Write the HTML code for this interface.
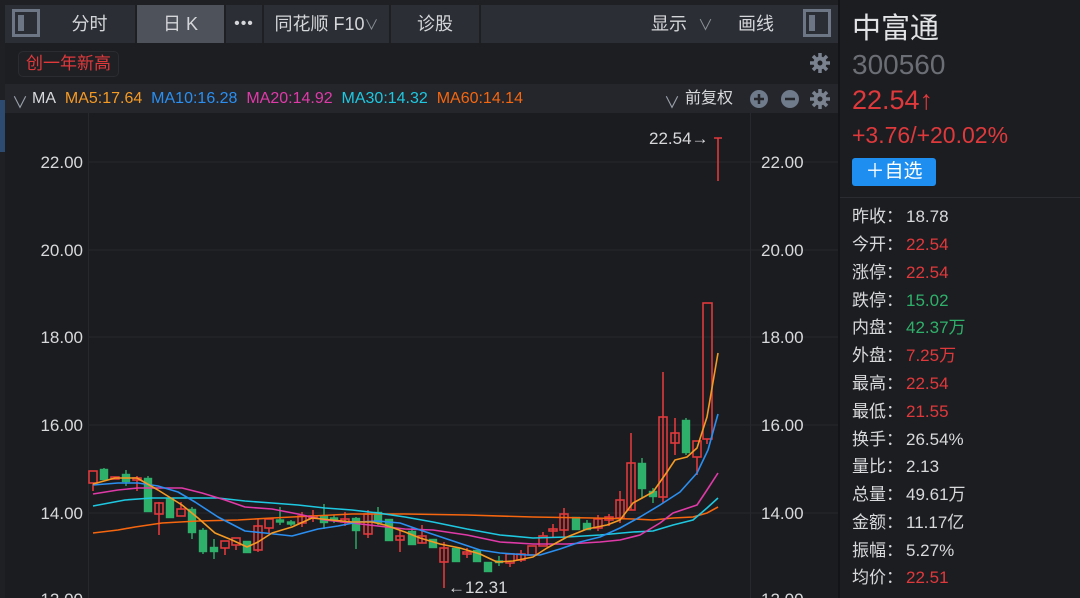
<!DOCTYPE html>
<html><head><meta charset="utf-8"><style>
*{margin:0;padding:0;box-sizing:border-box}
body{width:1080px;height:598px;overflow:hidden;background:#1b1c20;font-family:"Liberation Sans","Noto Sans CJK SC",sans-serif;position:relative;color:#d8d9db}
.a{position:absolute}
.top{left:5px;top:0;width:835px;height:5px;background:#1e2024}
.bar{left:5px;top:5px;width:835px;height:38px;background:#2b2e35}
.cell{top:5px;height:38px;line-height:38px;text-align:center;font-size:18px;color:#d4d6d9;border-right:2px solid #1d1f23;white-space:nowrap}
.ico{width:28px;height:28px;border:3px solid #6c7685;}
.ico i{position:absolute;left:3px;top:3px;width:6px;height:16px;background:#6c7685}
.st{left:852px;font-size:17px;color:#d8d9db;height:22px;line-height:22px;white-space:nowrap;width:220px}
.st span{position:absolute;left:54px;top:0;line-height:22px}
.r{color:#e0393c}.g{color:#2fb06a}
</style></head><body>
<div class="a" style="left:0;top:0;width:5px;height:598px;background:#1e2024"></div>
<div class="a" style="left:0;top:100px;width:5px;height:52px;background:#2d4b70"></div>
<div class="a top"></div>
<div class="a bar"></div>
<div class="a ico" style="left:12px;top:9px"><i></i></div>
<div class="a cell" style="left:44px;width:93px">分时</div>
<div class="a cell" style="left:137px;width:89px;background:#4e535b">日 K</div>
<div class="a cell" style="left:226px;width:38px;font-size:16px;letter-spacing:1px">•••</div>
<div class="a cell" style="left:264px;width:127px">同花顺 F10<span style="color:#8a8f96;font-size:14px">∨</span></div>
<div class="a cell" style="left:391px;width:90px">诊股</div>
<div class="a" style="left:651px;top:12px;font-size:18px;line-height:24px;color:#d4d6d9;white-space:nowrap">显示 <span style="color:#8a8f96;font-size:15px;margin-left:6px">∨</span></div>
<div class="a" style="left:738px;top:12px;font-size:18px;line-height:24px;color:#d4d6d9">画线</div>
<div class="a ico" style="left:803px;top:9px"><i></i></div>
<div class="a" style="left:5px;top:43px;width:835px;height:41px;background:#1d1e22"></div>
<div class="a" style="left:18px;top:51px;width:101px;height:26px;border:1px solid #2a2c31;border-radius:5px;background:#1f2024;color:#e0393c;font-size:17px;line-height:24px;text-align:center">创一年新高</div>
<div class="a" style="left:5px;top:84px;width:835px;height:29px;background:#24262c"></div>
<div class="a" style="left:12px;top:89px;font-size:16px;color:#9aa0a8">∨</div>
<div class="a" style="left:32px;top:88px;font-size:16px;line-height:22px;white-space:nowrap"><span style="color:#d8d9db">MA</span>&nbsp;&nbsp;<span style="color:#f59a23">MA5:17.64</span>&nbsp;&nbsp;<span style="color:#2a8ff0">MA10:16.28</span>&nbsp;&nbsp;<span style="color:#e03aa8">MA20:14.92</span>&nbsp;&nbsp;<span style="color:#1ec8e0">MA30:14.32</span>&nbsp;&nbsp;<span style="color:#f5660f">MA60:14.14</span></div>
<div class="a" style="left:664px;top:89px;font-size:16px;color:#9aa0a8">∨</div>
<div class="a" style="left:685px;top:88px;font-size:16px;line-height:22px;color:#d8d9db">前复权</div>
<svg class="a" style="left:0;top:0" width="840" height="598">
<g fill="#6f7a8a">
<circle cx="759" cy="99" r="9"/><circle cx="790" cy="99" r="9"/>
</g>
<path d="M754 99h10M759 94v10M785 99h10" stroke="#24262c" stroke-width="2.5"/>
<g fill="#7a8290"><circle cx="820" cy="99" r="6.5"/><g stroke="#7a8290" stroke-width="3.5"><path d="M820 89v20M810 99h20M813 92l14 14M827 92l-14 14"/></g><circle cx="820" cy="99" r="2.5" fill="#24262c"/></g>
<g fill="#7a8290"><circle cx="820" cy="63" r="6.5"/><g stroke="#7a8290" stroke-width="3.5"><path d="M820 53v20M810 63h20M813 56l14 14M827 56l-14 14"/></g><circle cx="820" cy="63" r="2.5" fill="#1d1e22"/></g>
<g stroke="#26282d" stroke-width="1"><path d="M88 162H840M88 250H840M88 337H840M88 425H840M88 513H840M88.5 113V598M750.5 113V598"/></g>
<g font-size="17" fill="#d8d9db" text-anchor="end"><text x="83" y="168">22.00</text><text x="83" y="256">20.00</text><text x="83" y="343">18.00</text><text x="83" y="431">16.00</text><text x="83" y="519">14.00</text><text x="83" y="605">12.00</text></g>
<g font-size="17" fill="#d8d9db"><text x="761" y="168">22.00</text><text x="761" y="256">20.00</text><text x="761" y="343">18.00</text><text x="761" y="431">16.00</text><text x="761" y="519">14.00</text><text x="761" y="605">12.00</text><text x="649" y="144">22.54→</text><text x="448" y="593">←12.31</text></g>
<g stroke="#e0393c" stroke-width="1.6" fill="none">
<path d="M718 138v43M714 138h8"/>
<path d="M93 483v8M137 476v15M159 502v33M181 502v7M225 548v7M236 545v5M258 519v33M269 528v6M302 512v15M313 510v12M345 512v14M368 510v28M400 530v22M422 525v18M444 542v46M467 548v10M510 563v4M521 550v12M543 532v4M553 524v14M564 508v30M598 515v16M609 514v12M620 491v32M631 433v77M663 372v131M675 418v37M697 457v18M707 439v5"/>
<rect x="89" y="471" width="8" height="12"/><rect x="111" y="477" width="8" height="2"/><rect x="133" y="478" width="8" height="2"/><rect x="155" y="503" width="8" height="11"/><rect x="177" y="509" width="8" height="7"/><rect x="221" y="541" width="8" height="7"/><rect x="232" y="538" width="8" height="7"/><rect x="254" y="526" width="8" height="24"/><rect x="265" y="519" width="8" height="9"/><rect x="298" y="516" width="8" height="7"/><rect x="309" y="516" width="8" height="2"/><rect x="341" y="519" width="8" height="3"/><rect x="364" y="514" width="8" height="20"/><rect x="396" y="536" width="8" height="4"/><rect x="418" y="536" width="8" height="7"/><rect x="440" y="548" width="8" height="14"/><rect x="463" y="552" width="8" height="2"/><rect x="506" y="554" width="8" height="9"/><rect x="517" y="554" width="8" height="6"/><rect x="528" y="546" width="8" height="9"/><rect x="539" y="536" width="8" height="10"/><rect x="549" y="529" width="8" height="2"/><rect x="560" y="514" width="8" height="16"/><rect x="594" y="519" width="8" height="9"/><rect x="605" y="517" width="8" height="3"/><rect x="616" y="500" width="8" height="18"/><rect x="627" y="463" width="8" height="47"/><rect x="659" y="417" width="8" height="80"/><rect x="671" y="433" width="8" height="10"/><rect x="693" y="441" width="8" height="16"/><rect x="703" y="303" width="9" height="136"/>
</g>
<g fill="#2fb06a" stroke="#2fb06a" stroke-width="1.4">
<path d="M104 468v12M126 470v16M148 476v36M170 498v20M192 507v32M203 528v26M214 539v20M247 541v12M280 507v18M291 520v6M324 504v25M334 515v8M356 517v32M378 507v18M389 519v22M412 528v17M433 539v9M456 548v14M477 550v12M488 562v10M499 556v10M576 517v13M587 520v10M642 458v40M653 488v15M686 418v37"/>
<rect x="100.5" y="469.5" width="7" height="10"/><rect x="122.5" y="474.5" width="7" height="7"/><rect x="144.5" y="478.5" width="7" height="33"/><rect x="166.5" y="498.5" width="7" height="19"/><rect x="188.5" y="509.5" width="7" height="23"/><rect x="199.5" y="530.5" width="7" height="21"/><rect x="210.5" y="547.5" width="7" height="4"/><rect x="243.5" y="541.5" width="7" height="11"/><rect x="276.5" y="520" width="7" height="2"/><rect x="287.5" y="522" width="7" height="2"/><rect x="320.5" y="516.5" width="7" height="6"/><rect x="330.5" y="518" width="7" height="2"/><rect x="352.5" y="518.5" width="7" height="12"/><rect x="374.5" y="512.5" width="7" height="10"/><rect x="385.5" y="519.5" width="7" height="21"/><rect x="408.5" y="531.5" width="7" height="13"/><rect x="429.5" y="539.5" width="7" height="8"/><rect x="452.5" y="548.5" width="7" height="13"/><rect x="473.5" y="550.5" width="7" height="11"/><rect x="484.5" y="562.5" width="7" height="9"/><rect x="495.5" y="561" width="7" height="1.5"/><rect x="572.5" y="517.5" width="7" height="12"/><rect x="583.5" y="523.5" width="7" height="6"/><rect x="638.5" y="463.5" width="7" height="25"/><rect x="649.5" y="491.5" width="7" height="5"/><rect x="682.5" y="420.5" width="7" height="32"/>
</g>
<g fill="none" stroke-width="1.6" stroke-linejoin="round">
<polyline stroke="#f5660f" points="93,533 118,530 135,527 162,523 198,521 238,520 272,518 312,516 352,514 405,514 467,515 533,517 593,518 633,519 653,520 673,518 693,517 707,513 718,507"/>
<polyline stroke="#1ec8e0" points="93,506 125,500 152,498 185,498 218,498 245,501 272,503 298,505 325,508 352,510 378,513 405,517 433,522 467,529 500,535 533,538 567,537 600,535 633,532 653,531 673,525 693,520 707,508 718,498"/>
<polyline stroke="#e03aa8" points="93,494 118,490 138,488 182,488 202,493 225,500 245,507 272,509 298,514 325,520 352,523 378,526 405,529 433,530 467,535 500,542 533,544 567,544 600,542 620,540 640,535 660,523 673,513 697,505 707,490 718,473"/>
<polyline stroke="#2a8ff0" points="93,485 118,483 138,483 158,486 178,492 195,502 218,517 245,531 265,533 292,536 318,529 338,526 358,522 378,521 400,523 420,530 450,540 480,550 500,553 527,555 540,555 560,549 580,542 600,537 620,528 640,517 660,505 680,492 697,473 708,450 718,414"/>
<polyline stroke="#f59a23" points="93,484 115,478 137,478 158,490 182,505 198,518 215,533 232,540 247,547 258,542 272,533 292,527 312,518 332,520 352,522 372,522 385,525 405,532 420,538 440,544 460,548 480,554 497,562 513,561 533,557 547,548 567,537 587,529 607,525 620,520 633,503 653,492 667,472 675,460 687,457 697,448 707,417 718,353"/>
</g>
</svg>
<div class="a" style="left:838px;top:0;width:2px;height:598px;background:#131417"></div>
<div class="a" style="left:840px;top:0;width:240px;height:598px;background:#1c1d21"></div>
<div class="a" style="left:852px;top:12px;font-size:29px;line-height:34px;color:#e2e3e5">中富通</div>
<div class="a" style="left:852px;top:48px;font-size:28px;line-height:34px;color:#6b6e74">300560</div>
<div class="a r" style="left:852px;top:84px;font-size:27px;line-height:32px">22.54↑</div>
<div class="a r" style="left:852px;top:121px;font-size:23px;line-height:28px">+3.76/+20.02%</div>
<div class="a" style="left:852px;top:158px;width:84px;height:28px;background:#1e8ff0;border-radius:3px;color:#fff;font-size:19px;line-height:28px;text-align:center">＋自选</div>
<div class="a" style="left:840px;top:197px;width:240px;height:1px;background:#2a2c31"></div>
<div class="a st" style="top:206px">昨收：<span>18.78</span></div>
<div class="a st" style="top:234px">今开：<span class="r">22.54</span></div>
<div class="a st" style="top:262px">涨停：<span class="r">22.54</span></div>
<div class="a st" style="top:290px">跌停：<span class="g">15.02</span></div>
<div class="a st" style="top:317px">内盘：<span class="g">42.37万</span></div>
<div class="a st" style="top:345px">外盘：<span class="r">7.25万</span></div>
<div class="a st" style="top:373px">最高：<span class="r">22.54</span></div>
<div class="a st" style="top:401px">最低：<span class="r">21.55</span></div>
<div class="a st" style="top:429px">换手：<span>26.54%</span></div>
<div class="a st" style="top:456px">量比：<span>2.13</span></div>
<div class="a st" style="top:484px">总量：<span>49.61万</span></div>
<div class="a st" style="top:512px">金额：<span>11.17亿</span></div>
<div class="a st" style="top:540px">振幅：<span>5.27%</span></div>
<div class="a st" style="top:567px">均价：<span class="r">22.51</span></div>
</body></html>
